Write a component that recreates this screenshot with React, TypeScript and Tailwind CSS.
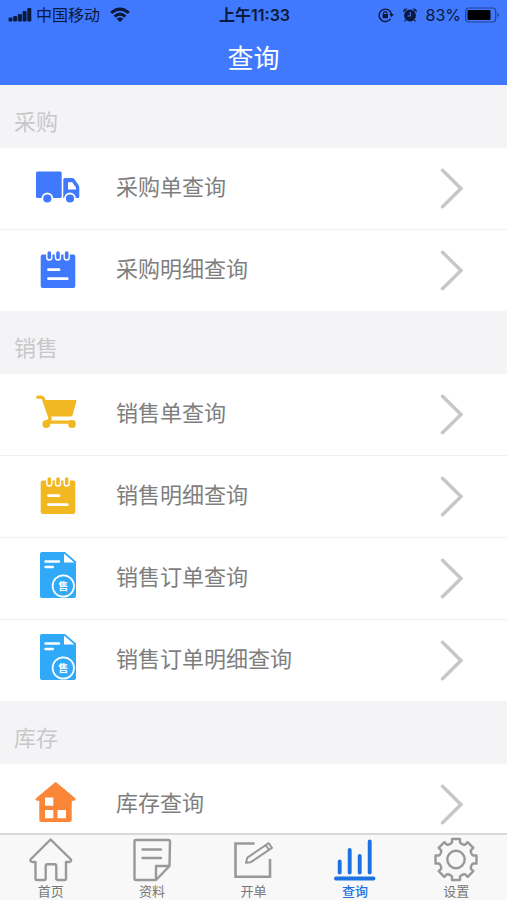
import { ReactNode, useState } from "react"
import clsx from "clsx"

type IconName = "truck" | "notepad" | "cart" | "order" | "house"

interface QueryItem {
  title: string
  icon: IconName
  color: string
}

interface QuerySection {
  title: string
  items: QueryItem[]
}

const sections: QuerySection[] = [
  {
    title: "采购",
    items: [
      { title: "采购单查询", icon: "truck", color: "text-[#4079fd]" },
      { title: "采购明细查询", icon: "notepad", color: "text-[#4079fd]" },
    ],
  },
  {
    title: "销售",
    items: [
      { title: "销售单查询", icon: "cart", color: "text-[#f2b822]" },
      { title: "销售明细查询", icon: "notepad", color: "text-[#f2b822]" },
      { title: "销售订单查询", icon: "order", color: "text-[#2fa9f8]" },
      { title: "销售订单明细查询", icon: "order", color: "text-[#2fa9f8]" },
    ],
  },
  {
    title: "库存",
    items: [{ title: "库存查询", icon: "house", color: "text-[#fb8637]" }],
  },
]

const itemIcons: Record<IconName, ReactNode> = {
  truck: (
    <>
      <rect x="2" y="7.5" width="25.7" height="26.5" rx="1.5" fill="currentColor" />
      <path d="M29.3 15.5a1.5 1.5 0 0 1 1.5-1.5h7.2q1.5 0 2.4 1.2l4 5.6q.9 1.3.9 3V32.5a1.5 1.5 0 0 1-1.5 1.5H29.3z" fill="currentColor" />
      <path d="M34 18.3h4.2l3.8 5.2v2H34z" fill="#fff" />
      <circle cx="13.3" cy="34.5" r="5" fill="currentColor" stroke="#fff" strokeWidth="1.8" />
      <circle cx="36" cy="34.5" r="5" fill="currentColor" stroke="#fff" strokeWidth="1.8" />
    </>
  ),
  notepad: (
    <>
      <rect x="6.7" y="8.5" width="34.6" height="33.5" rx="2" fill="currentColor" />
      <g strokeLinecap="round">
        <path d="M15.3 7v4.5M24 7v4.5M32.7 7v4.5" stroke="#fff" strokeWidth="6.4" />
        <path d="M15.3 7v4.5M24 7v4.5M32.7 7v4.5" stroke="currentColor" strokeWidth="3.6" />
        <path d="M14.5 23.7H25M14.5 32.7h18.7" stroke="#fff" strokeWidth="2.8" />
      </g>
    </>
  ),
  cart: (
    <>
      <path d="M9.5 10H41.5q1.3 0 .9 1.3L38.6 25q-.4 1.5-1.9 1.5H15z" fill="currentColor" />
      <path d="M3.7 7.2H7q1.8 0 2.4 1.6L16.2 28.5l-3 3.7H37" fill="none" stroke="currentColor" strokeWidth="3.2" strokeLinecap="round" strokeLinejoin="round" />
      <circle cx="12.3" cy="34" r="3.9" fill="currentColor" />
      <circle cx="38" cy="34" r="3.9" fill="currentColor" />
    </>
  ),
  order: (
    <>
      <path d="M8-2H31L42 7.5V42a2 2 0 0 1-2 2H8a2 2 0 0 1-2-2V0a2 2 0 0 1 2-2z" fill="currentColor" />
      <path d="M30-.5L40.3 8.5H30z" fill="#fff" />
      <path d="M11.5 7.5H25M11.5 13h7.3" stroke="#fff" strokeWidth="2.4" strokeLinecap="round" />
      <circle cx="29.3" cy="32" r="10.7" fill="none" stroke="#fff" strokeWidth="1.7" />
      <text x="29.3" y="35.5" textAnchor="middle" fontSize="10" fontWeight="700" fill="#fff">售</text>
    </>
  ),
  house: (
    <>
      <path d="M20.3 2.9q1.4-1.2 2.8 0L41 18q1.4 1.3.2 2.3-.5.4-1.4.4H37.7V40a2 2 0 0 1-2 2H7.3a2 2 0 0 1-2-2V20.7H3.5q-1.5 0-1.9-1-.3-.9.7-1.7z" fill="currentColor" />
      <path d="M11 17.4h8.3v8.3H11zM11 30h8.3v8.3H11zM23.5 30h8.5v8.3h-8.5z" fill="#fff" />
    </>
  ),
}

// eight-toothed gear outline around (24, 23.5)
const gearPath = (() => {
  const tooth = [[-5.2, -15.8], [-4, -17], [-4, -20.5], [4, -20.5], [4, -17], [5.2, -15.8]]
  const points: string[] = []
  for (let i = 0; i < 8; i++) {
    const angle = (i * Math.PI) / 4
    tooth.forEach(([x, y]) => {
      const px = 24 + x * Math.cos(angle) - y * Math.sin(angle)
      const py = 23.5 + x * Math.sin(angle) + y * Math.cos(angle)
      points.push(`${px.toFixed(1)} ${py.toFixed(1)}`)
    })
  }
  return `M${points.join("L")}Z`
})()

const tabs: { title: string; icon: ReactNode }[] = [
  {
    title: "首页",
    icon: <path d="M23.6 3.5L3.5 23.5Q3 26 5.5 26H8.5V42.5Q8.5 44 10 44H17.5Q18.7 44 18.7 42.5V30Q18.7 28.3 20.5 28.3H27.5Q29.3 28.3 29.3 30V42.5Q29.3 44 30.8 44H37.5Q39 44 39 42.5V26H42Q44.5 26 44 23.5Z" />,
  },
  {
    title: "资料",
    icon: <path d="M8 4H40.5Q42 4 42 5.5L41.5 30L28 44H8Q6.5 44 6.5 42.5V5.5Q6.5 4 8 4ZM41 30H28V43.5M14.5 13.5H33M14.5 22H33" />,
  },
  {
    title: "开单",
    icon: (
      <>
        <path strokeLinecap="butt" strokeLinejoin="miter" strokeWidth="2.6" d="M25.5 7.5H6.5V40.7H41V23" />
        <path strokeWidth="2" d="M17 26.8L18.4 21.6L39.6 7.2L43 11.8L21.8 26.2ZM36.8 9.2L40 13.8" />
      </>
    ),
  },
  {
    title: "查询",
    icon: <path strokeWidth="3.9" d="M8.7 25.5V36.5M18.7 14V36.5M28.7 20V36.5M38.7 5.5V36.5M5 42.5H42.5" />,
  },
  {
    title: "设置",
    icon: (
      <>
        <path d={gearPath} />
        <circle cx="24" cy="23.5" r="8.7" />
      </>
    ),
  },
]

function StatusBar() {
  return (
    <div className="grid h-7 grid-cols-[1fr_auto_1fr] items-center pt-px pl-2 pr-1.5 text-base leading-6 text-[#0b1a3c]">
      <div className="flex items-center">
        <svg className="h-4 w-6" viewBox="0 0 24 16" fill="currentColor">
          <rect x="0.5" y="10.5" width="4" height="4" rx="1.2" />
          <rect x="5.2" y="9" width="4" height="5.5" rx="1.2" />
          <rect x="9.9" y="7" width="4" height="7.5" rx="1.2" />
          <rect x="14.6" y="4" width="4" height="10.5" rx="1.2" />
          <rect x="19.3" y="1" width="4" height="13.5" rx="1.2" />
        </svg>
        <span className="ml-1">中国移动</span>
        <svg className="ml-2.5 h-4 w-5" viewBox="0 0 20 16" fill="none" stroke="currentColor" strokeWidth="3">
          <path d="M1.2 6Q10-1.8 18.8 6M4.6 9.6Q10 4.6 15.4 9.6" />
          <path d="M10 15L6.6 11.8Q10 9 13.4 11.8Z" fill="currentColor" stroke="none" />
        </svg>
      </div>
      <span className="font-semibold">上午11:33</span>
      <div className="flex items-center justify-end">
        <svg className="h-4 w-4" viewBox="0 0 16 16" fill="none" stroke="currentColor" strokeWidth="1.4">
          <path d="M12.5 11.8A6.2 6.2 0 1 1 13.4 7" />
          <path d="M11.3 7h4.5l-2.2 3.2z" fill="currentColor" stroke="none" />
          <rect x="4.5" y="7" width="5.5" height="4.2" rx="0.5" fill="currentColor" stroke="none" />
          <path d="M5.5 7.5V6a1.8 1.8 0 0 1 3.5 0v1.5" strokeWidth="1.1" />
        </svg>
        <svg className="ml-2 h-4 w-4" viewBox="0 0 16 16" fill="currentColor">
          <circle cx="8" cy="8.5" r="5.9" />
          <path d="M1.3 5.5a3 3 0 0 1 4.2-3.7zM14.7 5.5a3 3 0 0 0-4.2-3.7zM3 12.5l-1 2.2 2.5-1zM13 12.5l1 2.2-2.5-1z" />
          <path d="M8.3 5v4H5.5" fill="none" stroke="#4079fd" strokeWidth="1.1" />
        </svg>
        <span className="ml-2">83%</span>
        <svg className="ml-1 h-4 w-9" viewBox="0 0 36 16" fill="none">
          <rect x="0.7" y="1" width="30" height="14" rx="3" stroke="currentColor" strokeOpacity="0.55" strokeWidth="1.2" />
          <rect x="2.5" y="3" width="23" height="10" rx="1" fill="#000" />
          <path d="M32.5 5.5q3 2.5 0 5z" fill="currentColor" fillOpacity="0.6" />
        </svg>
      </div>
    </div>
  )
}

function QueryRow({ item }: { item: QueryItem }) {
  return (
    <li>
      <a href="#" className="flex h-[81px] items-center pr-11">
        <span className={clsx("flex w-[116px] shrink-0 justify-center", item.color)}>
          <svg className="h-[49px] w-12 overflow-visible" viewBox="0 0 48 49" aria-hidden="true">
            {itemIcons[item.icon]}
          </svg>
        </span>
        <span className="flex-1 pb-1 text-[22px] leading-8 text-[#7e7e7e]">{item.title}</span>
        <svg className="h-[41px] w-6" viewBox="0 0 24 41" fill="none" stroke="#c7c7c7" strokeWidth="3.4" strokeLinecap="round" aria-hidden="true">
          <path d="M3.5 2.2L22 20.5L3.5 38.8" />
        </svg>
      </a>
    </li>
  )
}

export default function App() {
  const [activeTab, setActiveTab] = useState("查询")

  return (
    <div className="flex h-screen flex-col bg-white font-[Inter,'Noto_Sans_CJK_SC',sans-serif]">
      <header className="shrink-0 bg-[#4079fd]">
        <StatusBar />
        <h1 className="flex h-[57px] items-center justify-center pt-1 text-[26px] leading-8 text-white">查询</h1>
      </header>

      <main className="min-h-0 flex-1 overflow-hidden">
        {sections.map((section) => (
          <section key={section.title}>
            <h2 className="flex h-[63px] items-center bg-[#f4f4f7] pt-2.5 pl-3.5 text-[22px] leading-8 text-[#c8c8ca]">
              {section.title}
            </h2>
            <ul className="divide-y divide-[#f1f1f1]">
              {section.items.map((item) => (
                <QueryRow key={item.title} item={item} />
              ))}
            </ul>
          </section>
        ))}
      </main>

      {/* Bottom tabs */}
      <nav className="grid shrink-0 grid-cols-5 border-t-2 border-[#d9d9d9] bg-[#f8f8f8]">
        {tabs.map((tab) => (
          <button
            key={tab.title}
            type="button"
            onClick={() => setActiveTab(tab.title)}
            className={clsx(
              "flex flex-col items-center pt-px",
              activeTab === tab.title ? "font-medium text-[#1c72e0]" : "text-[#777]"
            )}
          >
            <svg
              className={clsx("h-[46px] w-12", activeTab !== tab.title && "text-[#999]")}
              viewBox="0 0 48 46"
              fill="none"
              stroke="currentColor"
              strokeWidth="2.4"
              strokeLinecap="round"
              strokeLinejoin="round"
              aria-hidden="true"
            >
              {tab.icon}
            </svg>
            <span className="text-[13px] leading-[18px]">{tab.title}</span>
          </button>
        ))}
      </nav>
    </div>
  )
}
